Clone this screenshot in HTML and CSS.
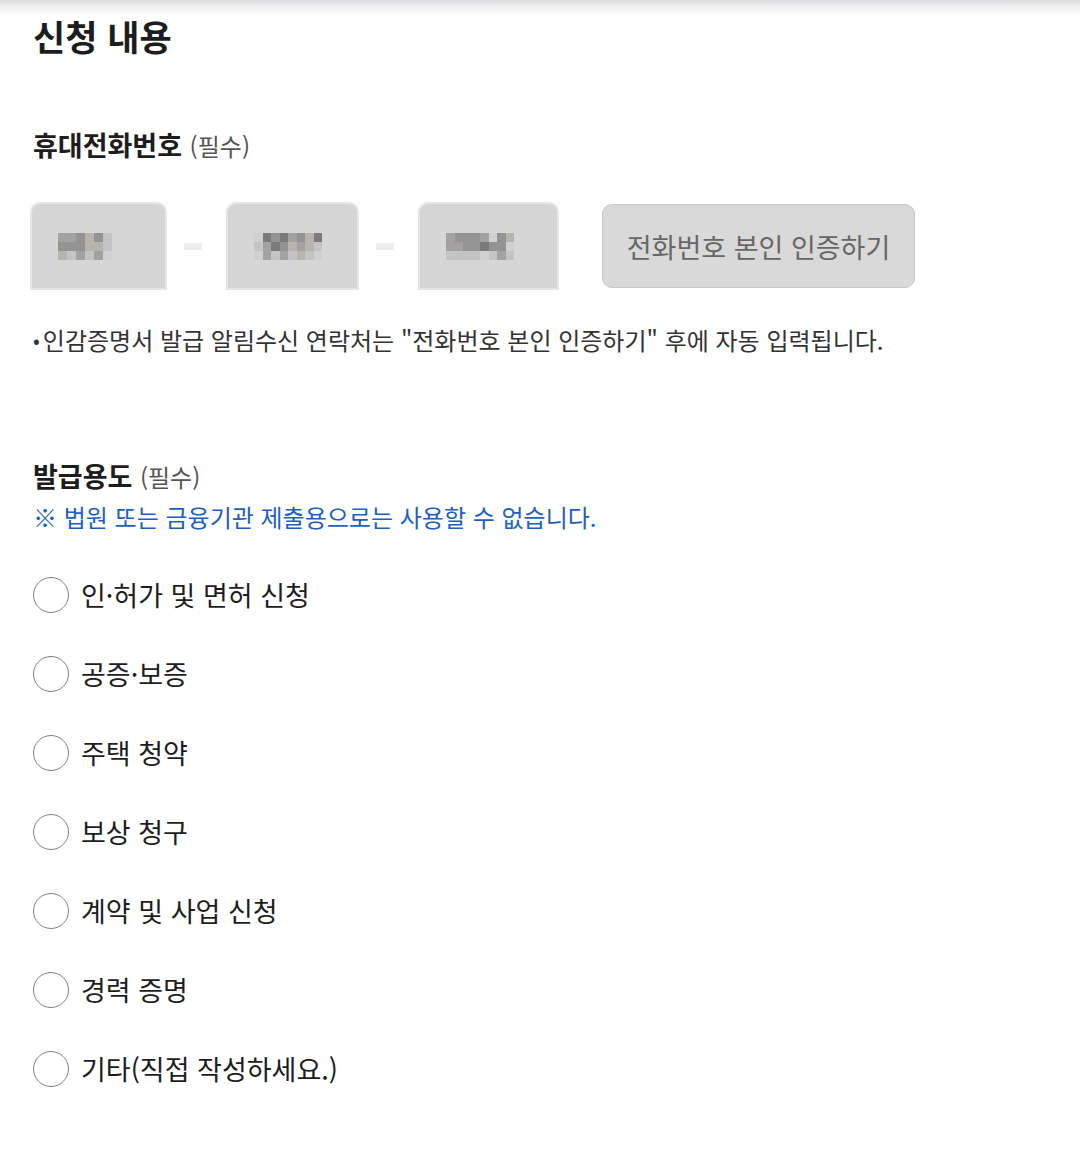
FILE: index.html
```html
<!DOCTYPE html>
<html lang="ko">
<head>
  <meta charset="UTF-8">
  <title>신청 내용</title>
  <link rel="stylesheet" href="styles.css">
</head>
<body>
  <div class="topbar"></div>
  <main class="page">
    <h2 class="title">신청 내용</h2>

    <!-- 휴대전화번호 -->
    <section class="field phone">
      <h3 class="label">휴대전화번호 <span class="req">(필수)</span></h3>
      <div class="phone-row">
        <div class="tel">
          <div class="blur b1">
            <i class="g3"></i><i class="g3"></i><i class="g2"></i><i class="g4"></i><i class="g2"></i><i class="g5"></i>
            <i class="g2"></i><i class="g2"></i><i class="g2"></i><i class="g4"></i><i class="g4"></i><i class="g5"></i>
            <i class="g4"></i><i class="g5"></i><i class="g3"></i><i class="g5"></i><i class="g3"></i><i class="g6"></i>
          </div>
        </div>
        <span class="dash"></span>
        <div class="tel">
          <div class="blur b2">
            <i class="g6"></i><i class="g1"></i><i class="g2"></i><i class="g1"></i><i class="g3"></i><i class="g2"></i><i class="g4"></i><i class="g1"></i>
            <i class="g5"></i><i class="g3"></i><i class="g1"></i><i class="g2"></i><i class="g4"></i><i class="g3"></i><i class="g4"></i><i class="g5"></i>
            <i class="g6"></i><i class="g3"></i><i class="g5"></i><i class="g3"></i><i class="g5"></i><i class="g4"></i><i class="g5"></i><i class="g6"></i>
          </div>
        </div>
        <span class="dash"></span>
        <div class="tel">
          <div class="blur b3">
            <i class="g3"></i><i class="g2"></i><i class="g2"></i><i class="g2"></i><i class="g3"></i><i class="g6"></i><i class="g2"></i><i class="g4"></i>
            <i class="g3"></i><i class="g3"></i><i class="g2"></i><i class="g2"></i><i class="g1"></i><i class="g2"></i><i class="g2"></i><i class="g6"></i>
            <i class="g5"></i><i class="g5"></i><i class="g5"></i><i class="g5"></i><i class="g6"></i><i class="g5"></i><i class="g3"></i><i class="g5"></i>
          </div>
        </div>
        <button class="verify" type="button">전화번호 본인 인증하기</button>
      </div>
      <p class="hint"><span class="dot">•</span>인감증명서 발급 알림수신 연락처는 "전화번호 본인 인증하기" 후에 자동 입력됩니다.</p>
    </section>

    <!-- 발급용도 -->
    <section class="field purpose">
      <h3 class="label">발급용도 <span class="req">(필수)</span></h3>
      <p class="warn">※ 법원 또는 금융기관 제출용으로는 사용할 수 없습니다.</p>
      <ul class="radios">
        <li><label><input type="radio" name="use"><span>인·허가 및 면허 신청</span></label></li>
        <li><label><input type="radio" name="use"><span>공증·보증</span></label></li>
        <li><label><input type="radio" name="use"><span>주택 청약</span></label></li>
        <li><label><input type="radio" name="use"><span>보상 청구</span></label></li>
        <li><label><input type="radio" name="use"><span>계약 및 사업 신청</span></label></li>
        <li><label><input type="radio" name="use"><span>경력 증명</span></label></li>
        <li><label><input type="radio" name="use"><span>기타(직접 작성하세요.)</span></label></li>
      </ul>
    </section>
  </main>
</body>
</html>
```

FILE: styles.css
```css
* {
  box-sizing: border-box;
}
body {
  margin: 0;
  background: #fff;
  color: #222;
  font-family: "Noto Sans CJK KR", "Noto Sans", sans-serif;
}
.topbar {
  height: 16px;
  background: linear-gradient(to bottom, #dcdce0 0%, #eeeeef 35%, #fff 100%);
}
.page {
  padding: 0 33px;
}
.title {
  margin: -2px 0 0;
  font-size: 35px;
  font-weight: 700;
  line-height: 44px;
  color: #1d1d1d;
}
.label {
  margin: 0;
  font-size: 27px;
  font-weight: 700;
  line-height: 34px;
  color: #1d1d1d;
}
.req {
  font-size: 24px;
  font-weight: 400;
  color: #555;
}
.phone {
  margin-top: 70px;
}
.phone-row {
  display: flex;
  align-items: center;
  margin-top: 41px;
  margin-left: -1px;
}
.tel {
  width: 133px;
  height: 84px;
  background: #d6d6d6;
  border-radius: 8px 8px 0 0;
  box-shadow: 0 0 0 2px #e6e6e6;
  display: flex;
  align-items: center;
}
.dash {
  width: 18px;
  height: 7px;
  margin: 0 26px 0 19px;
  background: #ececec;
}
.tel + .dash + .tel {
  width: 129px;
}
.tel + .dash + .tel + .dash + .tel {
  width: 137px;
}
.blur {
  display: grid;
  grid-template-columns: repeat(6, 9px);
  grid-auto-rows: 9px;
  margin-left: 26px;
}
.b2, .b3 {
  grid-template-columns: repeat(8, 8.5px);
}
.blur i {
  display: block;
}
.g1 { background: #7b7b7b; }
.g2 { background: #939393; }
.g3 { background: #a3a2a0; }
.g4 { background: #b7b3ad; }
.g5 { background: #c4c4c6; }
.g6 { background: #d0d0d0; }
.verify {
  margin-left: 45px;
  width: 313px;
  height: 84px;
  background: #d9d9d9;
  border: 1px solid #c6c6c6;
  border-radius: 10px;
  font-family: inherit;
  font-size: 27px;
  color: #666;
  padding: 0;
}
.hint {
  margin: 37px 0 0;
  font-size: 24px;
  line-height: 30px;
  color: #333;
}
.dot {
  font-size: 20px;
  margin-right: 3px;
  vertical-align: 2px;
}
.purpose {
  margin-top: 104px;
}
.warn {
  margin: 8px 0 0;
  font-size: 24px;
  line-height: 30px;
  color: #1e5fc4;
}
.radios {
  list-style: none;
  margin: 45px 0 0;
  padding: 0;
}
.radios li {
  height: 79px;
}
.radios label {
  display: flex;
  align-items: center;
  gap: 12px;
}
.radios input {
  appearance: none;
  margin: 0;
  width: 36px;
  height: 36px;
  border: 1px solid #808080;
  border-radius: 50%;
  background: #fff;
}
.radios span {
  font-size: 27px;
  line-height: 36px;
  color: #1d1d1d;
}
```
